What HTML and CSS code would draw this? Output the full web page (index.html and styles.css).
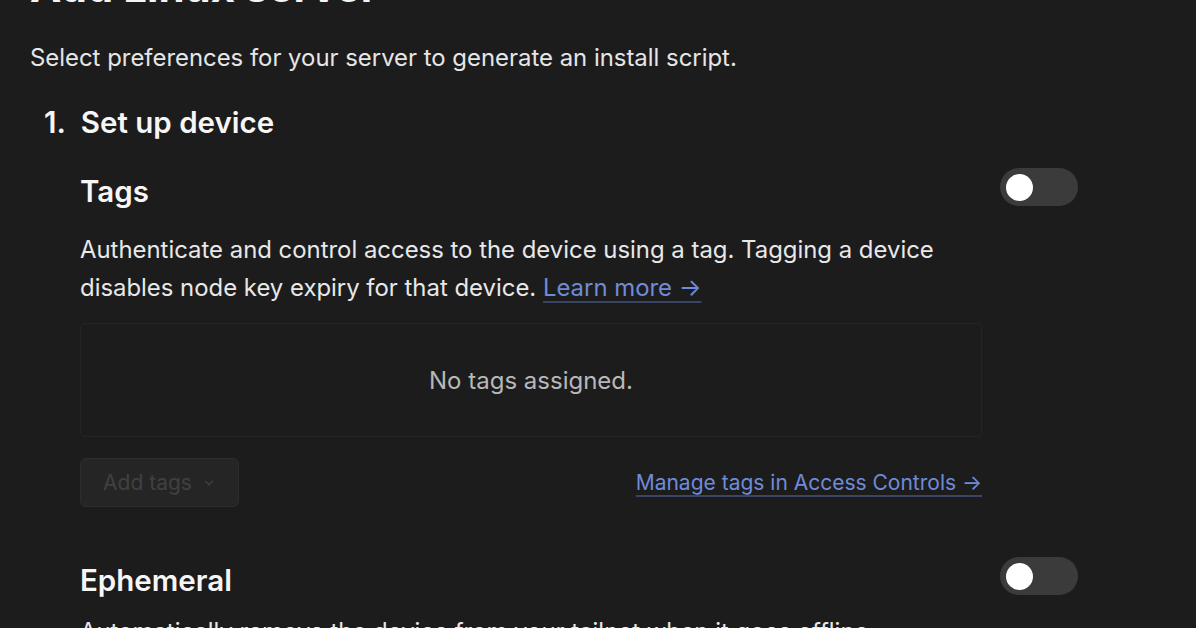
FILE: index.html
```html
<!DOCTYPE html>
<html>
<head>
<meta charset="utf-8">
<link rel="stylesheet" href="styles.css">
</head>
<body>
<div class="page">
  <h1 class="title">Add Linux server</h1>
  <p class="subtitle">Select preferences for your server to generate an install script.</p>
  <h2 class="step">1.&nbsp; Set up device</h2>
  <div class="section">
    <div class="section-head">
      <h3 class="section-title">Tags</h3>
      <span class="toggle"><span class="knob"></span></span>
    </div>
    <p class="desc">Authenticate and control access to the device using a tag. Tagging a device disables node key expiry for that device. <a class="link" href="#">Learn more →</a></p>
    <div class="tags-box">No tags assigned.</div>
    <div class="tags-actions">
      <button class="btn-disabled" disabled>Add tags <svg class="chev" viewBox="0 0 16 16" width="14" height="14"><path d="M4 6l4 4 4-4" fill="none" stroke="currentColor" stroke-width="1.6" stroke-linecap="round" stroke-linejoin="round"/></svg></button>
      <a class="link" href="#">Manage tags in Access Controls →</a>
    </div>
  </div>
  <div class="section section-eph">
    <div class="section-head">
      <h3 class="section-title">Ephemeral</h3>
      <span class="toggle"><span class="knob"></span></span>
    </div>
    <p class="desc">Automatically remove the device from your tailnet when it goes offline.</p>
  </div>
</div>
</body>
</html>
```

FILE: styles.css
```css
html, body {
  margin: 0;
  padding: 0;
  background: #1d1c1d;
  overflow: hidden;
}
body {
  font-family: Inter, "Noto Sans", sans-serif;
  color: #ececec;
}
.page {
  padding-left: 30px;
  width: 1048px;
}
.title {
  margin: -37px 0 0 0;
  font-size: 42px;
  line-height: 48px;
  font-weight: 700;
  color: #f4f4f4;
}
.subtitle {
  margin: 31px 0 0 0;
  font-size: 23.9px;
  line-height: 32px;
  color: #e6e6e6;
}
.step {
  margin: 30px 0 0 14px;
  font-size: 29.5px;
  line-height: 36px;
  font-weight: 600;
  color: #f6f6f6;
}
.section {
  margin-left: 50px;
  width: 998px;
}
.section-head {
  display: flex;
  justify-content: space-between;
  align-items: center;
  margin-top: 32px;
}
.section-title {
  margin: 0;
  font-size: 29.5px;
  line-height: 38px;
  font-weight: 600;
  color: #f6f6f6;
}
.toggle {
  width: 78px;
  height: 38px;
  margin-top: -8px;
  border-radius: 19px;
  background: #3b3b3b;
  display: flex;
  align-items: center;
  padding-left: 6px;
  box-sizing: border-box;
}
.knob {
  width: 27px;
  height: 27px;
  border-radius: 50%;
  background: #ffffff;
}
.desc {
  margin: 21px 0 0 0;
  width: 902px;
  font-size: 23.9px;
  line-height: 38px;
  color: #e8e8e8;
}
.link {
  color: #6f8bd8;
  text-decoration: underline;
  text-decoration-color: #3a4563;
  text-underline-offset: 5px;
}
.tags-box {
  margin-top: 16px;
  width: 902px;
  height: 114px;
  box-sizing: border-box;
  border: 1px solid #262526;
  border-radius: 4px;
  display: flex;
  align-items: center;
  justify-content: center;
  font-size: 24px;
  color: #b8b8b8;
}
.tags-actions {
  width: 902px;
  margin-top: 21px;
  display: flex;
  justify-content: space-between;
  align-items: center;
  font-size: 21px;
}
.btn-disabled {
  width: 159px;
  height: 49px;
  background: #262526;
  border: 1px solid #2e2d2e;
  border-radius: 6px;
  color: #414041;
  font-family: inherit;
  font-size: 21px;
  display: flex;
  align-items: center;
  justify-content: center;
  gap: 10px;
  padding: 0;
}
.chev {
  display: block;
}
.section-eph .section-head {
  margin-top: 54px;
}
.section-eph .desc {
  margin-top: 14px;
}
```
